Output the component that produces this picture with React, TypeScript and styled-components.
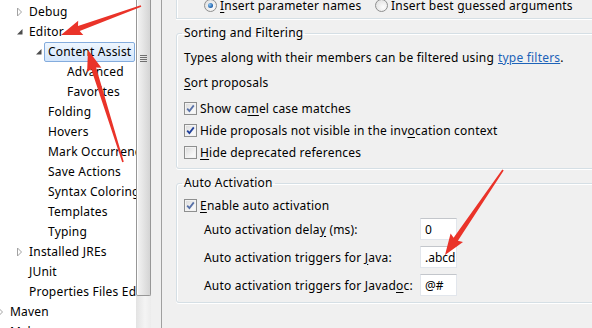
import styled, { createGlobalStyle, css } from 'styled-components';

const GlobalStyle = createGlobalStyle`
  html, body { margin: 0; padding: 0; }
  body {
    font-family: 'Noto Sans', 'Noto Sans CJK SC', sans-serif;
    font-size: 12px;
    letter-spacing: 0.2px;
    color: #000;
  }
`;

type TreeNode = {
  label: string;
  level: number;
  toggle?: 'open' | 'closed';
  selected?: boolean;
};

const tree: TreeNode[] = [
  { label: 'Debug', level: 1, toggle: 'closed' },
  { label: 'Editor', level: 1, toggle: 'open' },
  { label: 'Content Assist', level: 2, toggle: 'open', selected: true },
  { label: 'Advanced', level: 3 },
  { label: 'Favorites', level: 3 },
  { label: 'Folding', level: 2 },
  { label: 'Hovers', level: 2 },
  { label: 'Mark Occurrences', level: 2 },
  { label: 'Save Actions', level: 2 },
  { label: 'Syntax Coloring', level: 2 },
  { label: 'Templates', level: 2 },
  { label: 'Typing', level: 2 },
  { label: 'Installed JREs', level: 1, toggle: 'closed' },
  { label: 'JUnit', level: 1 },
  { label: 'Properties Files Editor', level: 1 },
  { label: 'Maven', level: 0, toggle: 'closed' },
  { label: 'Mylyn', level: 0, toggle: 'closed' },
];

// red annotation arrows: tail -> tip
const arrows = [
  { from: [141, 6], to: [61, 35] },
  { from: [123, 162], to: [88, 50] },
  { from: [503, 170], to: [445, 255] },
];

function arrowPoints(from: number[], to: number[]) {
  const [tx, ty] = from;
  const [px, py] = to;
  const len = Math.hypot(px - tx, py - ty);
  const ux = (px - tx) / len;
  const uy = (py - ty) / len;
  const nx = -uy;
  const ny = ux;
  const headLen = 19;
  const bx = px - ux * headLen;
  const by = py - uy * headLen;
  const pt = (x: number, y: number, w: number) =>
    `${(x + nx * w).toFixed(1)},${(y + ny * w).toFixed(1)}`;
  return [
    pt(tx, ty, 0.8),
    pt(bx, by, 2.6),
    pt(bx - ux * 2, by - uy * 2, 7.5),
    `${px},${py}`,
    pt(bx - ux * 2, by - uy * 2, -7.5),
    pt(bx, by, -2.6),
    pt(tx, ty, -0.8),
  ].join(' ');
}

export default function App() {
  return (
    <>
      <GlobalStyle />
      <Window>
        <TreePane>
          {tree.map((n) => (
            <TreeRow key={n.label}>
              <Toggle $level={n.level}>
                {n.toggle === 'closed' && (
                  <svg width="9" height="10" viewBox="0 0 9 10">
                    <polygon points="1.5,1 5.5,5 1.5,9" fill="#fff" stroke="#a3a3a3" />
                  </svg>
                )}
                {n.toggle === 'open' && (
                  <svg width="9" height="10" viewBox="0 0 9 10">
                    <polygon points="6.5,2 6.5,7.5 1,7.5" fill="#4d4d4d" />
                  </svg>
                )}
              </Toggle>
              <NodeLabel $selected={n.selected}>{n.label}</NodeLabel>
            </TreeRow>
          ))}
        </TreePane>

        <ScrollBar>
          <Thumb>
            <Grip>
              <i />
              <i />
              <i />
              <i />
            </Grip>
          </Thumb>
        </ScrollBar>
        <Gutter />

        <Page>
          <CutGroup>
            <RadioRow>
              <RadioOption $width={171}>
                <Radio $checked />
                <span>
                  <Mn>I</Mn>nsert parameter names
                </span>
              </RadioOption>
              <RadioOption>
                <Radio />
                <span>
                  Insert best <Mn>g</Mn>uessed arguments
                </span>
              </RadioOption>
            </RadioRow>
          </CutGroup>

          <Group>
            <Legend>Sorting and Filtering</Legend>
            <Line>
              Types along with their members can be filtered using <Link>type filters</Link>.
            </Line>
            <Line $gap={3}>
              <Mn>S</Mn>ort proposals
            </Line>
            <Line $gap={4}>
              <Check checked soft />
              <span>
                Show ca<Mn>m</Mn>el case matches
              </span>
            </Line>
            <Line>
              <Check checked />
              <span>
                Hide proposals not visible in the inv<Mn>o</Mn>cation context
              </span>
            </Line>
            <Line>
              <Check />
              <span>
                <Mn>H</Mn>ide deprecated references
              </span>
            </Line>
          </Group>

          <Group $bottom={6} $top={4}>
            <Legend>Auto Activation</Legend>
            <Line>
              <Check checked soft />
              <span>
                <Mn>E</Mn>nable auto activation
              </span>
            </Line>
            <FieldRow $gap={2}>
              <FieldLabel>
                Auto activation dela<Mn>y</Mn> (ms):
              </FieldLabel>
              <Field readOnly value="0" />
            </FieldRow>
            <FieldRow $gap={6}>
              <FieldLabel>
                Auto activation triggers for <Mn>J</Mn>ava:
              </FieldLabel>
              <Field readOnly value=".abcd" />
            </FieldRow>
            <FieldRow $gap={6}>
              <FieldLabel>
                Auto activation triggers for Javad<Mn>o</Mn>c:
              </FieldLabel>
              <Field readOnly value="@#" />
            </FieldRow>
          </Group>
        </Page>

        <Annotations width="592" height="328" viewBox="0 0 592 328">
          {arrows.map((a, i) => (
            <polygon key={i} points={arrowPoints(a.from, a.to)} fill="#ea3329" />
          ))}
        </Annotations>
      </Window>
    </>
  );
}

function Check({ checked, soft }: { checked?: boolean; soft?: boolean }) {
  return (
    <CheckBox>
      {checked && (
        <svg width="9" height="9" viewBox="0 0 9 9">
          <path
            d="M1.2 4.6 L3.4 7 L7.8 1.4"
            fill="none"
            stroke={soft ? '#5871a8' : '#21409a'}
            strokeWidth="1.8"
          />
        </svg>
      )}
    </CheckBox>
  );
}

const Window = styled.div`
  position: relative;
  width: 592px;
  height: 328px;
  display: flex;
  overflow: hidden;
  background: #f0f0f0;
`;

const TreePane = styled.div`
  flex: none;
  width: 136px;
  padding-top: 2px;
  background: #fff;
  overflow: hidden;
`;

const TreeRow = styled.div`
  height: 20px;
  display: flex;
  align-items: center;
  white-space: nowrap;
`;

const Toggle = styled.span<{ $level: number }>`
  flex: none;
  width: 9px;
  height: 10px;
  margin-left: ${(p) => p.$level * 19 - 3}px;
  display: flex;
`;

const NodeLabel = styled.span<{ $selected?: boolean }>`
  height: 18px;
  line-height: 18px;
  padding: 0 3px;
  border: 1px solid transparent;
  border-radius: 2px;
  ${(p) =>
    p.$selected &&
    css`
      border-color: #84acdd;
      background: linear-gradient(#eef6fe, #d3e6fc);
    `}
`;

const ScrollBar = styled.div`
  flex: none;
  width: 15px;
  background: linear-gradient(to right, #e3e3e3, #f4f4f4 60%, #ececec);
`;

const Thumb = styled.div`
  height: 295px;
  border: 1px solid #979797;
  border-top: none;
  border-radius: 0 0 2px 2px;
  background: linear-gradient(to right, #f4f4f4, #e6e6e6 45%, #d4d4d4);
  box-shadow: inset 1px 0 0 #fdfdfd;
  display: flex;
  justify-content: center;
`;

const Grip = styled.div`
  margin-top: 55px;
  display: flex;
  flex-direction: column;
  gap: 1px;

  i {
    display: block;
    width: 7px;
    height: 1px;
    background: #6f6f6f;
  }
`;

const Gutter = styled.div`
  flex: none;
  width: 10px;
  border-right: 1px solid #a0a0a0;
  background: #f0f0f0;
`;

const Page = styled.div`
  flex: none;
  width: 460px;
  padding-left: 14px;
  display: flex;
  flex-direction: column;
`;

const CutGroup = styled.div`
  height: 10px;
  padding-bottom: 8px;
  border: 1px solid #d5dfe5;
  border-top: none;
  box-shadow: inset 1px 0 0 #fff, 0 1px 0 #fff;
  display: flex;
  align-items: center;
`;

const RadioRow = styled.div`
  display: flex;
  align-items: center;
  padding-left: 27px;
  white-space: nowrap;
`;

const RadioOption = styled.label<{ $width?: number }>`
  display: flex;
  align-items: center;
  gap: 3px;
  ${(p) => p.$width && `width: ${p.$width}px;`}
`;

const Radio = styled.span<{ $checked?: boolean }>`
  position: relative;
  flex: none;
  width: 11px;
  height: 11px;
  border-radius: 50%;
  border: 1px solid #8e8f8f;
  background: radial-gradient(circle at 65% 65%, #fdfdfd, #dadada);

  ${(p) =>
    p.$checked &&
    css`
      &::after {
        content: '';
        position: absolute;
        left: 3px;
        top: 3px;
        width: 5px;
        height: 5px;
        border-radius: 50%;
        background: radial-gradient(circle at 35% 35%, #8cc8f4, #1d5da8 70%);
      }
    `}
`;

const Group = styled.fieldset<{ $top?: number; $bottom?: number }>`
  margin: 7px 0 0;
  padding: ${(p) => p.$top ?? 6}px 7px ${(p) => p.$bottom ?? 5}px;
  min-width: 0;
  border: 1px solid #d5dfe5;
  border-radius: 3px;
  box-shadow: inset 1px 1px 0 #fff, 0 1px 0 #fff;
`;

const Legend = styled.legend`
  padding: 0 2px;
  margin-left: -2px;
  line-height: 14px;
`;

const Line = styled.div<{ $gap?: number }>`
  height: 22px;
  margin-top: ${(p) => p.$gap ?? 0}px;
  display: flex;
  align-items: center;
  white-space: nowrap;
`;

const CheckBox = styled.span`
  flex: none;
  width: 11px;
  height: 11px;
  margin-right: 3px;
  border: 1px solid #8e8f8f;
  background: linear-gradient(135deg, #d9d9d9, #f7f7f7 70%);
  box-shadow: inset 0 0 0 1px #f2f2f2;
  display: flex;
  align-items: center;
  justify-content: center;
`;

const Mn = styled.span`
  text-decoration: underline;
  text-underline-offset: 2px;
`;

const Link = styled.span`
  margin-left: 4px;
  color: #1d63b8;
  text-decoration: underline;
`;

const FieldRow = styled.div<{ $gap: number }>`
  height: 22px;
  margin-top: ${(p) => p.$gap}px;
  padding-left: 20px;
  display: flex;
  align-items: center;
  white-space: nowrap;
`;

const FieldLabel = styled.span`
  width: 216px;
  flex: none;
`;

const Field = styled.input`
  box-sizing: border-box;
  width: 37px;
  height: 22px;
  margin: 0;
  padding: 0 0 0 4px;
  font: inherit;
  color: #000;
  background: #fff;
  border: 1px solid #e2e6ec;
  border-top-color: #c3c6cb;
  outline: none;
`;

const Annotations = styled.svg`
  position: absolute;
  left: 0;
  top: 0;
  pointer-events: none;
`;
